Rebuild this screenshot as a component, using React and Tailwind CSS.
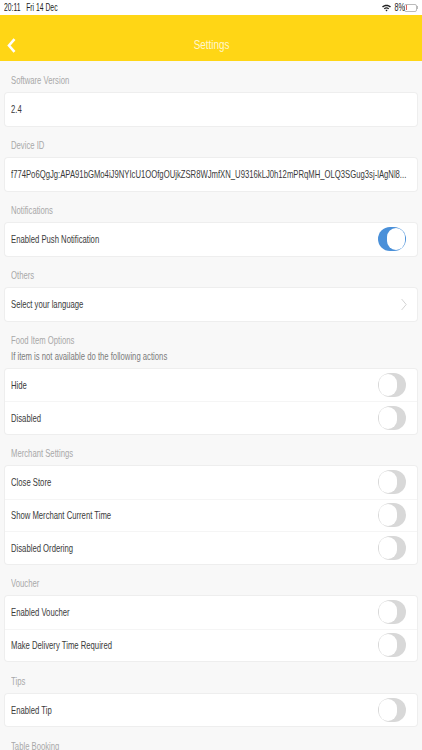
const Squeezed = ({ children }) => (
  <span className="inline-block origin-left scale-x-[.70] whitespace-nowrap">{children}</span>
);

const Toggle = ({ on }) => (
  <div className={`flex h-6 w-7 shrink-0 items-center rounded-full ${on ? "justify-end bg-[#4a90d9]" : "justify-start bg-[#d8d8d8]"}`}>
    <div className={`h-[22px] w-[18px] rounded-full bg-white ${on ? "mr-px" : "ml-px"}`} />
  </div>
);

const Row = ({ label, on, chevron, toggle = true }) => (
  <div className={`flex h-[32.5px] items-center justify-between pl-[6px] text-[11px] text-[#3a3a3a] [&+&]:border-t [&+&]:border-[#f5f5f5] ${chevron ? "pr-[10px]" : "pr-[11px]"}`}>
    <Squeezed>{label}</Squeezed>
    {chevron ? (
      <svg width="6" height="13" viewBox="0 0 6 13" fill="none" stroke="#d4d4d4" strokeWidth="1">
        <path d="M.6 1l4.6 5.5L.6 12" />
      </svg>
    ) : (
      toggle && <Toggle on={on} />
    )}
  </div>
);

const Section = ({ title, note, first, children }) => (
  <section className="px-[5px]">
    <div className={`flex flex-col justify-end px-[6px] pb-[6px] text-[11px] text-[#a8a8a8] ${note ? "h-[48px]" : first ? "h-[32px]" : "h-[32.5px]"}`}>
      <p className="leading-[13px]"><Squeezed>{title}</Squeezed></p>
      {note && <p className="mt-[3px] leading-[13px] text-[#7c7c7c]"><Squeezed>{note}</Squeezed></p>}
    </div>
    <div className="rounded-[3px] bg-white shadow-[0_0_0_1px_#eeeeee]">{children}</div>
  </section>
);

export default function App() {
  return (
    <div className="h-[750px] w-[422px] overflow-hidden bg-[#f8f8f8] font-['Liberation_Sans',Arial,sans-serif] antialiased">
      <div className="flex h-[15px] items-center justify-between bg-white px-[4px] text-[10px] text-[#222]">
        <span className="inline-block origin-left scale-x-[.68] whitespace-nowrap">20:11&nbsp;&nbsp; Fri 14 Dec</span>
        <div className="flex items-center gap-[1px]">
          <svg width="9" height="8" viewBox="0 0 9 8" fill="#222" className="mr-px">
            <path d="M0 2.6C2.6 0 6.4 0 9 2.6L8 3.6C6 1.7 3 1.7 1 3.6z" />
            <path d="M1.8 4.4C3.4 2.9 5.6 2.9 7.2 4.4L6.3 5.3C5.2 4.3 3.8 4.3 2.7 5.3z" />
            <path d="M3.4 6.1C4 5.5 5 5.5 5.6 6.1L4.5 7.6z" />
          </svg>
          <span className="inline-block w-[10px] origin-center scale-x-[.72] whitespace-nowrap text-center">8%</span>
          <div className="flex items-center">
            <div className="flex h-[8px] w-[13px] items-center rounded-[2px] border border-[#bbb] pl-px">
              <div className="h-[5px] w-px bg-[#e0605a]" />
            </div>
            <div className="h-[3px] w-px bg-[#bbb]" />
          </div>
        </div>
      </div>
      <header className="grid h-[46px] grid-cols-[1fr_auto_1fr] items-center bg-[#ffd615] px-[7px] pt-[14px]">
        <svg width="9" height="15" viewBox="0 0 9 15" fill="none" stroke="#fff" strokeWidth="2.6">
          <path d="M7.5 1.2L2 7.5l5.5 6.3" />
        </svg>
        <h1 className="scale-x-[.76] text-[13px] text-[#fff6cf]">Settings</h1>
      </header>
      <Section title="Software Version" first><Row label="2.4" toggle={false} /></Section>
      <Section title="Device ID">
        <Row label="f774Po6QgJg:APA91bGMo4iJ9NYIcU1OOfgOUjkZSR8WJmfXN_U9316kLJ0h12mPRqMH_OLQ3SGug3sj-lAgNl8..." toggle={false} />
      </Section>
      <Section title="Notifications"><Row label="Enabled Push Notification" on /></Section>
      <Section title="Others"><Row label="Select your language" chevron /></Section>
      <Section title="Food Item Options" note="If item is not available do the following actions">
        <Row label="Hide" />
        <Row label="Disabled" />
      </Section>
      <Section title="Merchant Settings">
        <Row label="Close Store" />
        <Row label="Show Merchant Current Time" />
        <Row label="Disabled Ordering" />
      </Section>
      <Section title="Voucher">
        <Row label="Enabled Voucher" />
        <Row label="Make Delivery Time Required" />
      </Section>
      <Section title="Tips"><Row label="Enabled Tip" /></Section>
      <Section title="Table Booking"><div className="h-[33px]" /></Section>
    </div>
  );
}
